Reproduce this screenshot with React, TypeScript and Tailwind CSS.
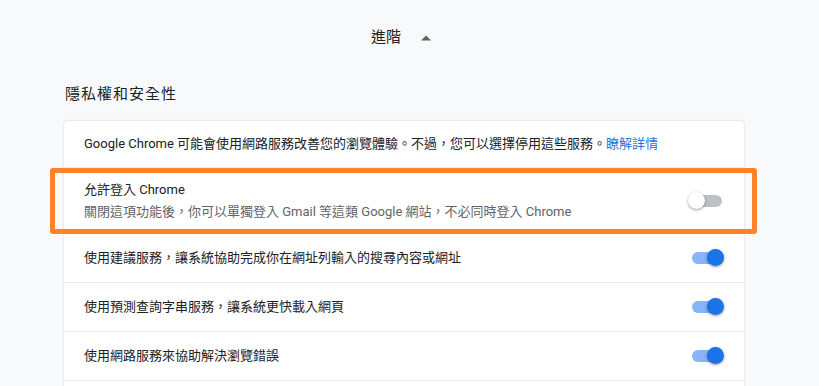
import { ReactNode } from "react";

const font = "font-['Roboto','Noto_Sans_CJK_TC',sans-serif]";

function Toggle({ on }: { on: boolean }) {
  return (
    <div className="relative w-[36px] h-[18px] shrink-0">
      <div
        className={`absolute left-[4px] right-[2px] top-[3px] h-[12px] rounded-full ${
          on ? "bg-[#8ab4f8]" : "bg-[#bdc1c6]"
        }`}
      />
      <div
        className={`absolute top-0 w-[17px] h-[17px] rounded-full shadow-[0_1px_3px_rgba(0,0,0,0.4)] ${
          on ? "right-0 bg-[#1a73e8]" : "left-0 bg-white"
        }`}
      />
    </div>
  );
}

function Row({ children, on, border = true }: { children: ReactNode; on?: boolean; border?: boolean }) {
  return (
    <div
      className={`flex items-center justify-between h-[49px] pl-[20px] pr-[20px] ${
        border ? "border-t border-[#e8eaed]" : ""
      }`}
    >
      <div className="text-[13px] text-[#202124]">{children}</div>
      {on !== undefined && <Toggle on={on} />}
    </div>
  );
}

export default function App() {
  return (
    <div className={`h-[386px] overflow-hidden bg-[#f8f9fa] ${font}`}>
      <div className="w-[680px] ml-[64px]">
        {/* Advanced toggle */}
        <div className="flex items-center justify-center gap-[20px] h-[74px] pr-[6px] pt-[1px]">
          <span className="text-[15px] text-[#202124]">進階</span>
          <svg width="10" height="6" viewBox="0 0 10 6">
            <path d="M0 5.5 L5 0.5 L10 5.5 Z" fill="#5f6368" />
          </svg>
        </div>

        {/* Section title */}
        <div className="flex items-center text-[15px] text-[#202124] pl-[1px] h-[47px] pb-[6px] tracking-[1px]">
          隱私權和安全性
        </div>

        {/* Card */}
        <div className="bg-white rounded-t-[4px] shadow-[0_0_2px_rgba(60,64,67,0.25)]">
          <div className="flex items-center h-[46px] pl-[20px] text-[13px] text-[#202124]">
            <span>
              Google Chrome 可能會使用網路服務改善您的瀏覽體驗。不過，您可以選擇停用這些服務。
              <span className="text-[#1a73e8]">瞭解詳情</span>
            </span>
          </div>

          <div className="relative flex items-center justify-between h-[66px] pl-[20px] pr-[20px] border-t border-[#e8eaed]">
            <div className="flex flex-col gap-[3px]">
              <span className="text-[13px] text-[#202124]">允許登入 Chrome</span>
              <span className="text-[13px] text-[#5f6368]">
                關閉這項功能後，你可以單獨登入 Gmail 等這類 Google 網站，不必同時登入 Chrome
              </span>
            </div>
            <Toggle on={false} />
            <div className="absolute -left-[14px] -right-[13px] top-[0px] -bottom-[1px] border-[5px] border-[#ff8228] rounded-[3px] pointer-events-none" />
          </div>

          <Row on={true}>使用建議服務，讓系統協助完成你在網址列輸入的搜尋內容或網址</Row>
          <Row on={true}>使用預測查詢字串服務，讓系統更快載入網頁</Row>
          <Row on={true}>使用網路服務來協助解決瀏覽錯誤</Row>
          <Row>&nbsp;</Row>
        </div>
      </div>
    </div>
  );
}
